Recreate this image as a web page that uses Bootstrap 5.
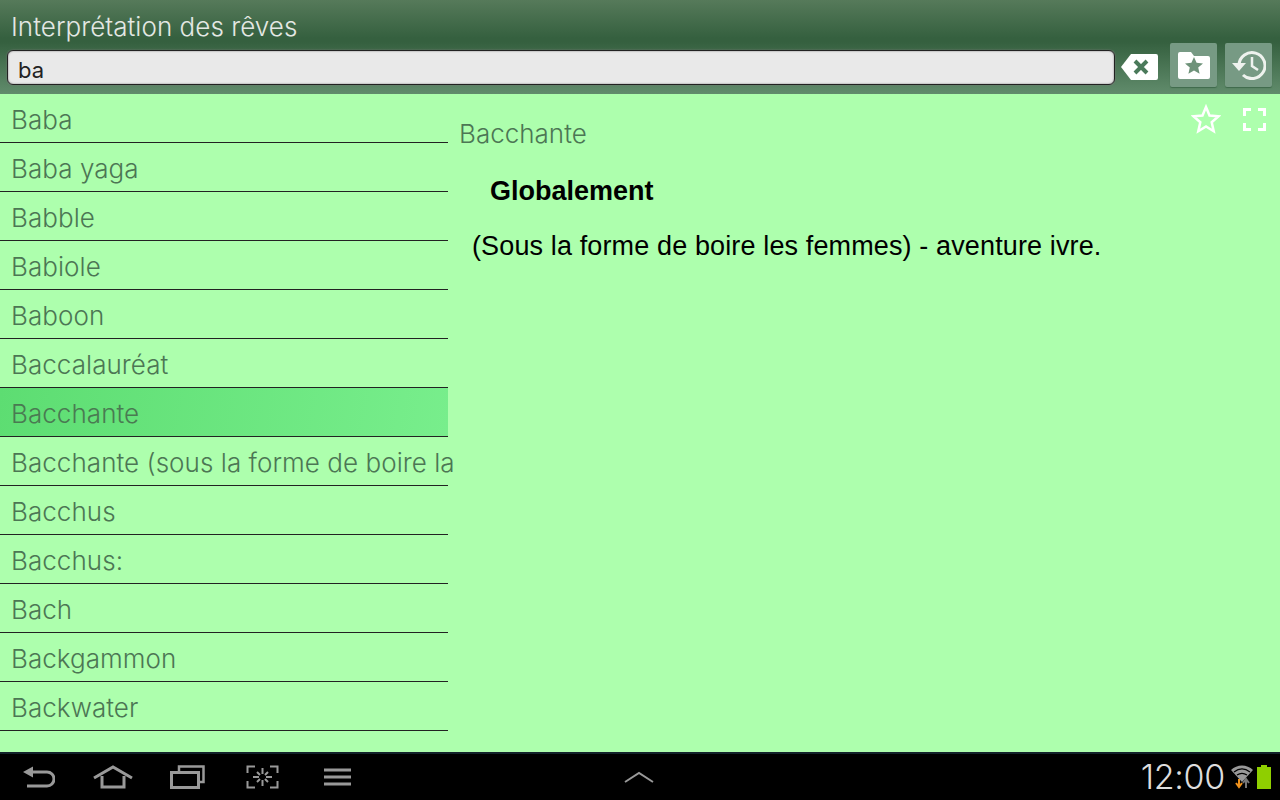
<!DOCTYPE html>
<html lang="fr"><head><meta charset="utf-8">
<link href="https://cdn.jsdelivr.net/npm/bootstrap@5.3.0/dist/css/bootstrap.min.css" rel="stylesheet">
<style>
html,body{height:100%;overflow:hidden}
body{width:1280px;height:800px;background:#adffad;font-family:"Liberation Sans",Arial,sans-serif}
.shell{height:800px}
.topbar{height:94px;background:linear-gradient(#567a5a 0,#35603f 38px,#35603f 42px,#618c6c 94px);padding:0 8px 0 7px}
.apptitle{height:43px;padding:12px 0 0 4px;font:300 26px/30px Inter,sans-serif;letter-spacing:.04px;color:#e4e8e4}
.searchrow{height:44px;gap:0}
.searchbox{width:1109px;height:35px;margin-top:5px;background:#e9e9e9;border:1px solid #222;border-radius:6px;box-shadow:inset 0 0 2px #777,0 0 2px #777;font:400 22px/38px Inter,sans-serif;color:#222;padding-left:10px}
.clearbtn{width:37px;height:28px;margin:3px 12px 0 6px}
.toolbtn{width:47px;height:44px;background:#779a84;border-radius:2px;box-shadow:0 1px 1px #3f6a4c}
.toolbtn+.toolbtn{margin-left:8px}
.mainpane{height:658px;overflow:hidden}
.wordlist{width:448px;flex:none;position:relative;overflow:visible}
.wordrow{height:49px;border-bottom:1px solid #222;padding:11px 0 0 11px;font:300 26px/30px Inter,sans-serif;letter-spacing:.05px;color:#4c7654;white-space:nowrap}
.wordrow.sel{background:linear-gradient(100deg,#5ddd72,#78ee8c);color:#4a7a52}
.reader{position:relative;flex:1}
.readtitle{padding:25px 0 0 11px;font:300 26px/30px Inter,sans-serif;color:#4c7654}
.readhead{margin:27px 0 0 42px;font:700 27px/30px "Liberation Sans",sans-serif;color:#000}
.readbody{margin:25px 0 0 24px;font:400 27px/30px "Liberation Sans",sans-serif;letter-spacing:.13px;color:#000}
.readtools{position:absolute;top:10px;right:14px;gap:22px}
.navbarbottom{height:48px;background:#000;border-top:2px solid #12222a;position:relative}
.navleft{padding-left:23px}
.navhome{margin-left:38px}
.navrecent{margin-left:37px}
.navshot{margin-left:41px}
.navmenu{margin-left:45px}
.navcenter{position:absolute;left:624px;top:17px}
.sysright{padding-right:9px;gap:4px}
.clock{font:300 34px/40px Inter,sans-serif;color:#ddd;letter-spacing:-.3px;margin-right:2px}
</style></head><body>
<div class="shell d-flex flex-column">
<header class="topbar">
<div class="apptitle">Interprétation des rêves</div>
<div class="searchrow d-flex align-items-center">
<div class="searchbox">ba</div>
<svg class="clearbtn" viewBox="0 0 37 28"><path d="M0 14 10 1h25a2 2 0 0 1 2 2v22a2 2 0 0 1-2 2H10z" fill="#fff"/><path d="M14 8 26 20M26 8 14 20" stroke="#4a7a5a" stroke-width="4"/></svg>
<div class="toolbtn d-flex align-items-center justify-content-center"><svg width="32" height="28" viewBox="0 0 32 28"><path d="M0 3a2 2 0 0 1 2-2h11l3 4h14a2 2 0 0 1 2 2v19a2 2 0 0 1-2 2H2a2 2 0 0 1-2-2z" fill="#fff"/><path d="m16 6 2.600 5.800 6.400.6-4.800 4.200 1.400 6.200-5.600-3.300-5.600 3.300 1.400-6.200-4.800-4.200 6.400-.6z" fill="#6e9279"/></svg></div>
<div class="toolbtn d-flex align-items-center justify-content-center"><svg width="34" height="30" viewBox="0 0 34 30"><path d="M7 15a13 13 0 1 1 4 10" fill="none" stroke="#eef2ee" stroke-width="3"/><path d="M0 13h14l-7 8z" fill="#eef2ee"/><path d="M20 7v9l6 4" fill="none" stroke="#eef2ee" stroke-width="2.500"/></svg></div>
</div>
</header>
<main class="mainpane d-flex">
<div class="wordlist">
<div class="wordrow">Baba</div>
<div class="wordrow">Baba yaga</div>
<div class="wordrow">Babble</div>
<div class="wordrow">Babiole</div>
<div class="wordrow">Baboon</div>
<div class="wordrow">Baccalauréat</div>
<div class="wordrow sel">Bacchante</div>
<div class="wordrow">Bacchante (sous la forme de boire la</div>
<div class="wordrow">Bacchus</div>
<div class="wordrow">Bacchus:</div>
<div class="wordrow">Bach</div>
<div class="wordrow">Backgammon</div>
<div class="wordrow">Backwater</div>
</div>
<section class="reader">
<div class="readtitle">Bacchante</div>
<div class="readhead">Globalement</div>
<div class="readbody">(Sous la forme de boire les femmes) - aventure ivre.</div>
<div class="readtools d-flex align-items-center">
<svg width="30" height="30" viewBox="0 0 30 30"><path d="m15 3 3.500 8.500 9 .8-6.800 6 2 8.900-7.700-4.700-7.700 4.700 2-8.900-6.800-6 9-.8z" fill="none" stroke="#fff" stroke-width="2.500"/></svg>
<svg width="23" height="23" viewBox="0 0 23 23"><path d="M1.500 8V1.500H8M15 1.500h6.500V8M21.500 15v6.500H15M8 21.500H1.500V15" fill="none" stroke="#fff" stroke-width="3"/></svg>
</div>
</section>
</main>
<footer class="navbarbottom d-flex align-items-center justify-content-between">
<div class="navleft d-flex align-items-center">
<svg width="32" height="22" viewBox="0 0 32 22"><path d="M8 6h16a7 7 0 0 1 0 14H4" fill="none" stroke="#999" stroke-width="3"/><path d="M0 6l10-5.500v11z" fill="#999"/></svg>
<svg class="navhome" width="40" height="24" viewBox="0 0 40 24"><path d="M1 13 20 2l19 11" fill="none" stroke="#999" stroke-width="3"/><path d="M9 11v11h22V11" fill="none" stroke="#999" stroke-width="3"/></svg>
<svg class="navrecent" width="35" height="24" viewBox="0 0 35 24"><path d="M9 6V1.500h24.500V17H30" fill="none" stroke="#999" stroke-width="2.500"/><rect x="1.500" y="7.500" width="27" height="15" fill="none" stroke="#999" stroke-width="3"/></svg>
<svg class="navshot" width="33" height="24" viewBox="0 0 33 24"><path d="M9 1.500H1.500V8M24 1.500h7.500V8M1.500 16v6.500H9M31.500 16v6.500H24M16.500 3v6M16.500 15v6M7 12h6M20 12h6M11 7l3 3M22 7l-3 3M11 17l3-3M22 17l-3-3" fill="none" stroke="#999" stroke-width="2"/></svg>
<svg class="navmenu" width="27" height="20" viewBox="0 0 27 20"><path d="M0 3h27M0 10h27M0 17h27" stroke="#999" stroke-width="3"/></svg>
</div>
<svg class="navcenter" width="30" height="12" viewBox="0 0 30 12"><path d="M1 11 15 2l14 9" fill="none" stroke="#999" stroke-width="2"/></svg>
<div class="sysright d-flex align-items-center">
<span class="clock">12:00</span>
<svg width="22" height="26" viewBox="0 0 22 26"><path d="M0 6C6 0 16 0 22 6L11 18z" fill="#999"/><path d="M3 8C8 4 14 4 19 8M6 11c3-2 7-2 10 0" fill="none" stroke="#000" stroke-width="1.200"/><path d="M8 15v7M5 19l3 4 3-4" fill="none" stroke="#f0921c" stroke-width="2"/><path d="M15 24v-8M12 19l3-4 3 4" fill="none" stroke="#777" stroke-width="2"/></svg>
<svg width="14" height="24" viewBox="0 0 14 24"><path d="M4 0h6v2h4v22H0V2h4z" fill="#8fcf00"/></svg>
</div>
</footer>
</div>
</body></html>
